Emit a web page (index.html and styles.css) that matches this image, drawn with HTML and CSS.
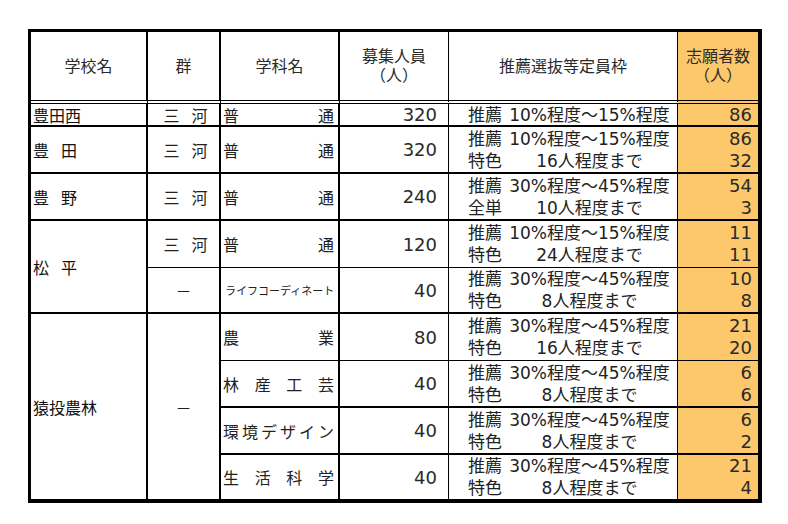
FILE: index.html
```html
<!DOCTYPE html>
<html lang="ja">
<head>
<meta charset="utf-8">
<title>推薦選抜等 志願者数</title>
<link rel="stylesheet" href="styles.css">
</head>
<body>
<div class="sheet">
  <div class="c c1 h">学校名</div>
  <div class="c c2 h">群</div>
  <div class="c c3 h">学科名</div>
  <div class="c c4 h"><span>募集人員</span><span>（人）</span></div>
  <div class="c c5 h">推薦選抜等定員枠</div>
  <div class="c c6 h"><span>志願者数</span><span>（人）</span></div>

  <div class="c c1 b2">豊田西</div>
  <div class="c c2 b2"><span class="sp">三　河</span></div>
  <div class="c c3 b2 dist"><span>普</span><span>通</span></div>
  <div class="c c4 b2">320</div>
  <div class="c c5 b2"><div class="ln"><span class="lb">推薦</span><span class="vl">10%程度～15%程度</span></div></div>
  <div class="c c6 b2"><span>86</span></div>

  <div class="c c1 b2"><span class="sp2">豊　田</span></div>
  <div class="c c2 b2"><span class="sp">三　河</span></div>
  <div class="c c3 b2 dist"><span>普</span><span>通</span></div>
  <div class="c c4 b2">320</div>
  <div class="c c5 b2"><div class="ln"><span class="lb">推薦</span><span class="vl">10%程度～15%程度</span></div><div class="ln"><span class="lb">特色</span><span class="vl">16人程度まで</span></div></div>
  <div class="c c6 b2"><span>86</span><span>32</span></div>

  <div class="c c1 b2"><span class="sp2">豊　野</span></div>
  <div class="c c2 b2"><span class="sp">三　河</span></div>
  <div class="c c3 b2 dist"><span>普</span><span>通</span></div>
  <div class="c c4 b2">240</div>
  <div class="c c5 b2"><div class="ln"><span class="lb">推薦</span><span class="vl">30%程度～45%程度</span></div><div class="ln"><span class="lb">全単</span><span class="vl">10人程度まで</span></div></div>
  <div class="c c6 b2"><span>54</span><span>3</span></div>

  <div class="c c1 b2 span2"><span class="sp2">松　平</span></div>
  <div class="c c2 b1"><span class="sp">三　河</span></div>
  <div class="c c3 b1 dist"><span>普</span><span>通</span></div>
  <div class="c c4 b1">120</div>
  <div class="c c5 b1"><div class="ln"><span class="lb">推薦</span><span class="vl">10%程度～15%程度</span></div><div class="ln"><span class="lb">特色</span><span class="vl">24人程度まで</span></div></div>
  <div class="c c6 b1"><span>11</span><span>11</span></div>

  <div class="c c2 b2">－</div>
  <div class="c c3 b2 small">ライフコーディネート</div>
  <div class="c c4 b2">40</div>
  <div class="c c5 b2"><div class="ln"><span class="lb">推薦</span><span class="vl">30%程度～45%程度</span></div><div class="ln"><span class="lb">特色</span><span class="vl">8人程度まで</span></div></div>
  <div class="c c6 b2"><span>10</span><span>8</span></div>

  <div class="c c1 span4">猿投農林</div>
  <div class="c c2 span4">－</div>
  <div class="c c3 b1 dist"><span>農</span><span>業</span></div>
  <div class="c c4 b1">80</div>
  <div class="c c5 b1"><div class="ln"><span class="lb">推薦</span><span class="vl">30%程度～45%程度</span></div><div class="ln"><span class="lb">特色</span><span class="vl">16人程度まで</span></div></div>
  <div class="c c6 b1"><span>21</span><span>20</span></div>

  <div class="c c3 b2 dist"><span>林</span><span>産</span><span>工</span><span>芸</span></div>
  <div class="c c4 b2">40</div>
  <div class="c c5 b2"><div class="ln"><span class="lb">推薦</span><span class="vl">30%程度～45%程度</span></div><div class="ln"><span class="lb">特色</span><span class="vl">8人程度まで</span></div></div>
  <div class="c c6 b2"><span>6</span><span>6</span></div>

  <div class="c c3 b2 dist"><span>環</span><span>境</span><span>デ</span><span>ザ</span><span>イ</span><span>ン</span></div>
  <div class="c c4 b2">40</div>
  <div class="c c5 b2"><div class="ln"><span class="lb">推薦</span><span class="vl">30%程度～45%程度</span></div><div class="ln"><span class="lb">特色</span><span class="vl">8人程度まで</span></div></div>
  <div class="c c6 b2"><span>6</span><span>2</span></div>

  <div class="c c3 dist"><span>生</span><span>活</span><span>科</span><span>学</span></div>
  <div class="c c4">40</div>
  <div class="c c5"><div class="ln"><span class="lb">推薦</span><span class="vl">30%程度～45%程度</span></div><div class="ln"><span class="lb">特色</span><span class="vl">8人程度まで</span></div></div>
  <div class="c c6"><span>21</span><span>4</span></div>
</div>
</body>
</html>
```

FILE: styles.css
```css
html, body {
  margin: 0;
  padding: 0;
  background: #ffffff;
}

body {
  font-family: "DejaVu Sans", "Noto Sans CJK JP", sans-serif;
  color: #222222;
  font-size: 16px;
}

.sheet {
  display: grid;
  width: max-content;
  margin: 29px 0 0 28px;
  grid-template-columns: 117px 73px 119px 109px 229px 80px;
  grid-template-rows: 72px 23px 47px 47px 47px 46px 47px 47px 47px 44px;
  border-top: 3px solid #000;
  border-left: 3px solid #000;
  border-right: 4px solid #000;
  border-bottom: 4px solid #000;
}

.c {
  box-sizing: border-box;
  display: flex;
  flex-direction: column;
  justify-content: center;
  min-width: 0;
  overflow: hidden;
  white-space: nowrap;
}

.b1 { border-bottom: 1px solid #000; }
.b2 { border-bottom: 2px solid #000; }

.span2 { grid-row: span 2; }
.span4 { grid-row: span 4; }

.c1 {
  border-right: 2px solid #000;
  align-items: flex-start;
  padding-left: 2px;
  font-size: 16px;
  color: #111;
}

.c2 {
  border-right: 2px solid #000;
  align-items: center;
  font-size: 16px;
}

.c3 {
  border-right: 2px solid #000;
  padding: 0 4px 0 2px;
  font-size: 16px;
}

.c4 {
  border-right: 1px solid #000;
  align-items: flex-end;
  padding-right: 11px;
  font-size: 18px;
  color: #2a2a2a;
}

.c5 {
  border-right: 1px solid #000;
  padding-left: 19px;
  font-size: 17px;
  line-height: 22px;
}

.c6 {
  background: #fdc86b;
  align-items: flex-end;
  padding-right: 6px;
  font-size: 18px;
  line-height: 22px;
  color: #2a2a2a;
}

.h {
  align-items: center;
  justify-content: center;
  padding: 0;
  text-align: center;
  font-size: 16px;
  line-height: 19px;
  color: #2a2a2a;
  border-bottom: 4px double #000;
}

.sp { letter-spacing: -2px; margin-right: -2px; }
.sp2 { letter-spacing: -2px; }

.dist {
  flex-direction: row;
  justify-content: space-between;
  align-items: center;
}

.small {
  font-size: 11px;
  padding-left: 4px;
}

.ln {
  display: flex;
  align-items: center;
}

.lb {
  width: 34px;
  flex: none;
}

.vl {
  flex: 1;
  text-align: center;
}
```
